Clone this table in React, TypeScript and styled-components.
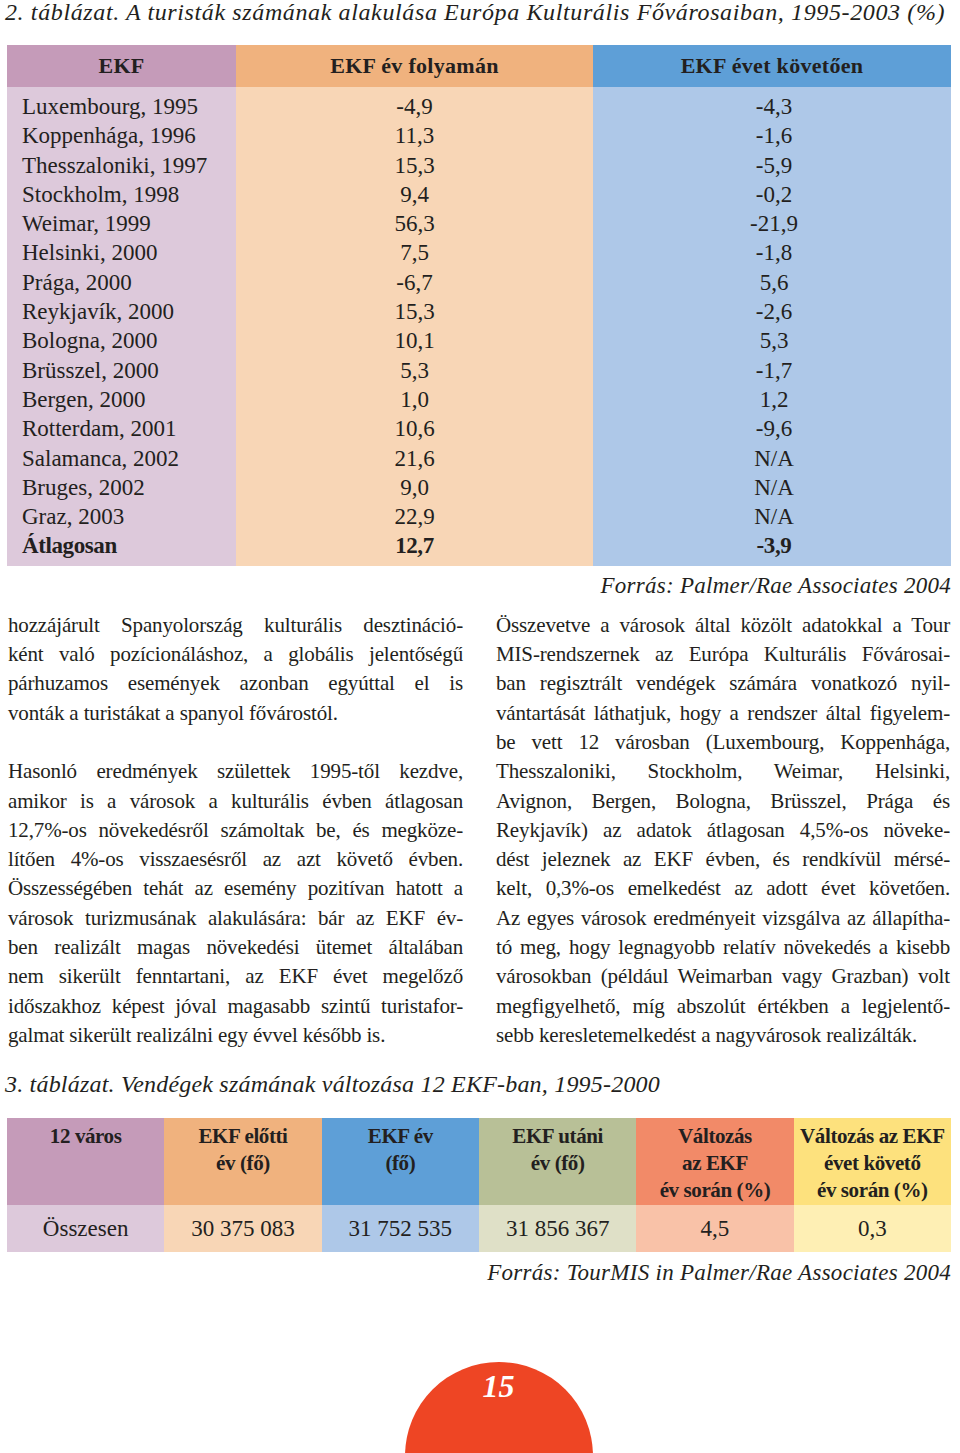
import React from "react";
import styled, { createGlobalStyle } from "styled-components";

const Global = createGlobalStyle`
  html, body { margin: 0; padding: 0; background: #ffffff; }
  body { font-family: "Liberation Serif", "DejaVu Serif", serif; color: #231f20; }
  #root { width: 960px; height: 1453px; overflow: hidden; }
`;

const Page = styled.div`
  width: 960px;
  height: 1453px;
  display: flex;
  flex-direction: column;
  overflow: hidden;
`;

const Caption = styled.div<{ $mt: number; $ls: number; $lh: number }>`
  margin-top: ${(p) => p.$mt}px;
  padding-left: 5px;
  font-style: italic;
  font-size: 24px;
  line-height: ${(p) => p.$lh}px;
  letter-spacing: ${(p) => p.$ls}px;
  white-space: nowrap;
`;

const Source = styled.div<{ $mt: number }>`
  margin-top: ${(p) => p.$mt}px;
  padding-right: 9px;
  text-align: right;
  font-style: italic;
  font-size: 23px;
  line-height: 26px;
  letter-spacing: 0.27px;
  white-space: nowrap;
`;

const Table1 = styled.div`
  margin: 21px 9px 0 7px;
  display: grid;
  grid-template-columns: 229px 357px 358px;
`;

const Col = styled.div`
  display: flex;
  flex-direction: column;
`;

const HeadCell = styled.div<{ $bg: string }>`
  background: ${(p) => p.$bg};
  height: 42px;
  display: flex;
  align-items: center;
  justify-content: center;
  font-weight: bold;
  font-size: 22px;
  letter-spacing: 0.3px;
`;

const BodyCell = styled.div<{ $bg: string; $align: string; $pl: number }>`
  background: ${(p) => p.$bg};
  padding: 5px 0 5px ${(p) => p.$pl}px;
  text-align: ${(p) => p.$align};
  font-size: 23px;
  line-height: 29.3px;
`;

const Row = styled.div<{ $bold?: boolean }>`
  font-weight: ${(p) => (p.$bold ? "bold" : "normal")};
  letter-spacing: ${(p) => (p.$bold ? "-0.4px" : "0")};
  white-space: nowrap;
`;

const Columns = styled.div`
  margin-top: 12px;
  padding: 0 10px 0 8px;
  display: grid;
  grid-template-columns: 455px 454px;
  column-gap: 33px;
`;

const TextCol = styled.div`
  display: flex;
  flex-direction: column;
  font-size: 21px;
  line-height: 29.3px;
`;

const Line = styled.div<{ $last?: boolean }>`
  text-align: justify;
  text-align-last: ${(p) => (p.$last ? "left" : "justify")};
  letter-spacing: -0.15px;
`;

const Blank = styled.div`
  height: 29.3px;
`;

const Table2 = styled.div`
  margin: 21px 9px 0 7px;
  display: grid;
  grid-template-columns: repeat(6, 1fr);
`;

const Head2 = styled.div<{ $bg: string }>`
  background: ${(p) => p.$bg};
  height: 87px;
  box-sizing: border-box;
  padding-top: 5px;
  text-align: center;
  font-weight: bold;
  font-size: 21px;
  line-height: 27px;
  letter-spacing: -0.4px;
  white-space: nowrap;
`;

const Body2 = styled.div<{ $bg: string }>`
  background: ${(p) => p.$bg};
  height: 47px;
  display: flex;
  align-items: center;
  justify-content: center;
  font-size: 23px;
  letter-spacing: 0;
  white-space: nowrap;
`;

const Footer = styled.div`
  flex: 1;
  display: flex;
  justify-content: center;
  overflow: hidden;
`;

const Circle = styled.div`
  margin-top: 76px;
  margin-left: 37px;
  width: 188px;
  height: 188px;
  flex: none;
  border-radius: 50%;
  background: #ee4524;
  color: #ffffff;
  text-align: center;
  font-weight: bold;
  font-style: italic;
  font-size: 32px;
  line-height: 32px;
  padding-top: 8px;
  box-sizing: border-box;
`;

const C = {
  purpleH: "#c59bb9",
  orangeH: "#f0b27e",
  blueH: "#5e9fd7",
  greenH: "#b8c097",
  salmonH: "#f28a68",
  yellowH: "#fde17d",
  purpleB: "#ddc9db",
  orangeB: "#f8d6b6",
  blueB: "#aec8e8",
  greenB: "#dfe0c7",
  salmonB: "#f9c2a8",
  yellowB: "#feefb4",
};

const rows: [string, string, string][] = [
  ["Luxembourg, 1995", "-4,9", "-4,3"],
  ["Koppenhága, 1996", "11,3", "-1,6"],
  ["Thesszaloniki, 1997", "15,3", "-5,9"],
  ["Stockholm, 1998", "9,4", "-0,2"],
  ["Weimar, 1999", "56,3", "-21,9"],
  ["Helsinki, 2000", "7,5", "-1,8"],
  ["Prága, 2000", "-6,7", "5,6"],
  ["Reykjavík, 2000", "15,3", "-2,6"],
  ["Bologna, 2000", "10,1", "5,3"],
  ["Brüsszel, 2000", "5,3", "-1,7"],
  ["Bergen, 2000", "1,0", "1,2"],
  ["Rotterdam, 2001", "10,6", "-9,6"],
  ["Salamanca, 2002", "21,6", "N/A"],
  ["Bruges, 2002", "9,0", "N/A"],
  ["Graz, 2003", "22,9", "N/A"],
  ["Átlagosan", "12,7", "-3,9"],
];

const table1Cols = [
  { head: "EKF", hbg: C.purpleH, bbg: C.purpleB, align: "left", pl: 15 },
  { head: "EKF év folyamán", hbg: C.orangeH, bbg: C.orangeB, align: "center", pl: 0 },
  { head: "EKF évet követően", hbg: C.blueH, bbg: C.blueB, align: "center", pl: 4 },
];

const leftText: { t: string; last?: boolean; blank?: boolean }[] = [
  { t: "hozzájárult Spanyolország kulturális desztináció-" },
  { t: "ként való pozícionáláshoz, a globális jelentőségű" },
  { t: "párhuzamos események azonban egyúttal el is" },
  { t: "vonták a turistákat a spanyol fővárostól.", last: true },
  { t: "", blank: true },
  { t: "Hasonló eredmények születtek 1995-től kezdve," },
  { t: "amikor is a városok a kulturális évben átlagosan" },
  { t: "12,7%-os növekedésről számoltak be, és megköze-" },
  { t: "lítően 4%-os visszaesésről az azt követő évben." },
  { t: "Összességében tehát az esemény pozitívan hatott a" },
  { t: "városok turizmusának alakulására: bár az EKF év-" },
  { t: "ben realizált magas növekedési ütemet általában" },
  { t: "nem sikerült fenntartani, az EKF évet megelőző" },
  { t: "időszakhoz képest jóval magasabb szintű turistafor-" },
  { t: "galmat sikerült realizálni egy évvel később is.", last: true },
];

const rightText: { t: string; last?: boolean }[] = [
  { t: "Összevetve a városok által közölt adatokkal a Tour" },
  { t: "MIS-rendszernek az Európa Kulturális Fővárosai-" },
  { t: "ban regisztrált vendégek számára vonatkozó nyil-" },
  { t: "vántartását láthatjuk, hogy a rendszer által figyelem-" },
  { t: "be vett 12 városban (Luxembourg, Koppenhága," },
  { t: "Thesszaloniki, Stockholm, Weimar, Helsinki," },
  { t: "Avignon, Bergen, Bologna, Brüsszel, Prága és" },
  { t: "Reykjavík) az adatok átlagosan 4,5%-os növeke-" },
  { t: "dést jeleznek az EKF évben, és rendkívül mérsé-" },
  { t: "kelt, 0,3%-os emelkedést az adott évet követően." },
  { t: "Az egyes városok eredményeit vizsgálva az állapítha-" },
  { t: "tó meg, hogy legnagyobb relatív növekedés a kisebb" },
  { t: "városokban (például Weimarban vagy Grazban) volt" },
  { t: "megfigyelhető, míg abszolút értékben a legjelentő-" },
  { t: "sebb keresletemelkedést a nagyvárosok realizálták.", last: true },
];

const table2 = [
  { head: ["12 város"], val: "Összesen", hbg: C.purpleH, bbg: C.purpleB },
  { head: ["EKF előtti", "év (fő)"], val: "30 375 083", hbg: C.orangeH, bbg: C.orangeB },
  { head: ["EKF év", "(fő)"], val: "31 752 535", hbg: C.blueH, bbg: C.blueB },
  { head: ["EKF utáni", "év (fő)"], val: "31 856 367", hbg: C.greenH, bbg: C.greenB },
  { head: ["Változás", "az EKF", "év során (%)"], val: "4,5", hbg: C.salmonH, bbg: C.salmonB },
  { head: ["Változás az EKF", "évet követő", "év során (%)"], val: "0,3", hbg: C.yellowH, bbg: C.yellowB },
];

export default function App() {
  return (
    <Page>
      <Global />
      <Caption $mt={0} $lh={24} $ls={0.62}>
        2. táblázat. A turisták számának alakulása Európa Kulturális Fővárosaiban, 1995-2003 (%)
      </Caption>
      <Table1>
        {table1Cols.map((c, ci) => (
          <Col key={c.head}>
            <HeadCell $bg={c.hbg}>{c.head}</HeadCell>
            <BodyCell $bg={c.bbg} $align={c.align} $pl={c.pl}>
              {rows.map((r, ri) => (
                <Row key={ri} $bold={ri === rows.length - 1}>
                  {r[ci]}
                </Row>
              ))}
            </BodyCell>
          </Col>
        ))}
      </Table1>
      <Source $mt={7}>Forrás: Palmer/Rae Associates 2004</Source>
      <Columns>
        <TextCol>
          {leftText.map((l, i) =>
            l.blank ? <Blank key={i} /> : <Line key={i} $last={l.last}>{l.t}</Line>
          )}
        </TextCol>
        <TextCol>
          {rightText.map((l, i) => (
            <Line key={i} $last={l.last}>{l.t}</Line>
          ))}
        </TextCol>
      </Columns>
      <Caption $mt={21} $lh={26} $ls={0.2}>
        3. táblázat. Vendégek számának változása 12 EKF-ban, 1995-2000
      </Caption>
      <Table2>
        {table2.map((c) => (
          <Head2 key={c.val} $bg={c.hbg}>
            {c.head.map((h) => (
              <div key={h}>{h}</div>
            ))}
          </Head2>
        ))}
        {table2.map((c) => (
          <Body2 key={c.val + "b"} $bg={c.bbg}>{c.val}</Body2>
        ))}
      </Table2>
      <Source $mt={8}>Forrás: TourMIS in Palmer/Rae Associates 2004</Source>
      <Footer>
        <Circle>15</Circle>
      </Footer>
    </Page>
  );
}
